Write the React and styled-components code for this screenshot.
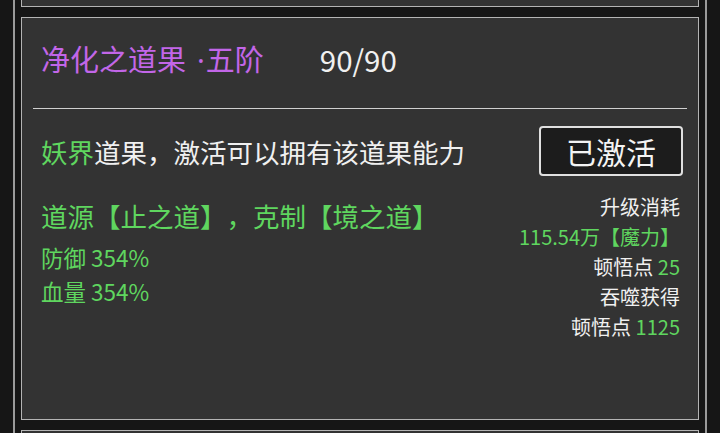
import React from "react";
import styled, { createGlobalStyle } from "styled-components";

const GlobalStyle = createGlobalStyle`
  html, body {
    margin: 0;
    padding: 0;
    background: #161616;
  }
  body {
    font-family: "Noto Sans CJK SC", "Noto Sans", sans-serif;
    color: #f0f0f0;
    text-spacing-trim: space-all;
  }
`;

const cost = [
  { label: "升级消耗" },
  { value: "115.54万【魔力】", green: true },
  { label: "顿悟点", value: "25" },
  { label: "吞噬获得" },
  { label: "顿悟点", value: "1125" },
];

const App = () => {
  return (
    <Page>
      <GlobalStyle />
      <Frame>
        <Stack>
          <StubCard />
          <Card>
            <Header>
              <Title>
                净化之道果<Dot>·</Dot>五阶
              </Title>
              <Count>90/90</Count>
            </Header>
            <Divider />
            <Body>
              <TopRow>
                <Desc>
                  <Green>妖界</Green>道果，激活可以拥有该道果能力
                </Desc>
                <ActiveButton>已激活</ActiveButton>
              </TopRow>
              <BottomRow>
                <Info>
                  <Source>道源【止之道】，克制【境之道】</Source>
                  <Stat>防御 354%</Stat>
                  <Stat>血量 354%</Stat>
                </Info>
                <CostList>
                  {cost.map((c, i) => (
                    <CostLine key={i}>
                      {c.green ? (
                        <Green>{c.value}</Green>
                      ) : (
                        <>
                          {c.label}
                          {c.value && <Green> {c.value}</Green>}
                        </>
                      )}
                    </CostLine>
                  ))}
                </CostList>
              </BottomRow>
            </Body>
          </Card>
          <StubCard />
        </Stack>
      </Frame>
    </Page>
  );
};

export default App;

const Page = styled.div`
  height: 433px;
  overflow: hidden;
  padding: 0 13px;
  box-sizing: border-box;
  background: #161616;
`;

const Frame = styled.div`
  display: flex;
  flex-direction: column;
  height: 100%;
  border-left: 2px solid #9a9a9a;
  border-right: 2px solid #9a9a9a;
  padding: 0 6px;
  box-sizing: border-box;
`;

const Stack = styled.div`
  display: flex;
  flex-direction: column;
  gap: 10px;
  margin-top: -40px;
`;

const Card = styled.div`
  flex-shrink: 0;
  height: 403px;
  background: #333333;
  border: 1px solid #b4b4b4;
  box-sizing: border-box;
  display: flex;
  flex-direction: column;
`;

const StubCard = styled(Card)`
  height: 47px;
`;

const Header = styled.div`
  display: flex;
  align-items: center;
  gap: 56px;
  height: 90px;
  padding: 0 19px 8px;
  box-sizing: border-box;
  line-height: 40px;
`;

const Title = styled.span`
  font-size: 29px;
  color: #c266e8;
`;

const Dot = styled.span`
  font-family: "Noto Sans", sans-serif;
  margin: 0 1px 0 11px;
`;

const Count = styled.span`
  font-size: 29.5px;
  color: #f0f0f0;
`;

const Divider = styled.div`
  height: 1px;
  margin: 0 11px;
  background: #d0d0d0;
`;

const Body = styled.div`
  display: flex;
  flex-direction: column;
  padding: 17px 15px 0 19px;
`;

const TopRow = styled.div`
  display: flex;
  justify-content: space-between;
  align-items: center;
`;

const Desc = styled.div`
  font-size: 26.5px;
  line-height: 36px;
  margin-top: 2px;
`;

const Green = styled.span`
  color: #5fd65f;
`;

const ActiveButton = styled.div`
  width: 144px;
  height: 50px;
  box-sizing: border-box;
  border: 2px solid #e0e0e0;
  border-radius: 4px;
  background: #1c1c1c;
  display: flex;
  align-items: center;
  justify-content: center;
  font-size: 30px;
  color: #f4f4f4;
`;

const BottomRow = styled.div`
  display: flex;
  justify-content: space-between;
  align-items: flex-start;
`;

const Info = styled.div`
  display: flex;
  flex-direction: column;
  padding-top: 22px;
  color: #5fd65f;
`;

const Source = styled.div`
  font-size: 26.5px;
  line-height: 36px;
  margin-bottom: 6px;
`;

const Stat = styled.div`
  font-size: 22.5px;
  line-height: 34px;
`;

const CostList = styled.div`
  display: flex;
  flex-direction: column;
  align-items: flex-end;
  padding-top: 16px;
  padding-right: 3px;
`;

const CostLine = styled.div`
  font-size: 20px;
  line-height: 30px;
  color: #f0f0f0;
  white-space: nowrap;
`;
